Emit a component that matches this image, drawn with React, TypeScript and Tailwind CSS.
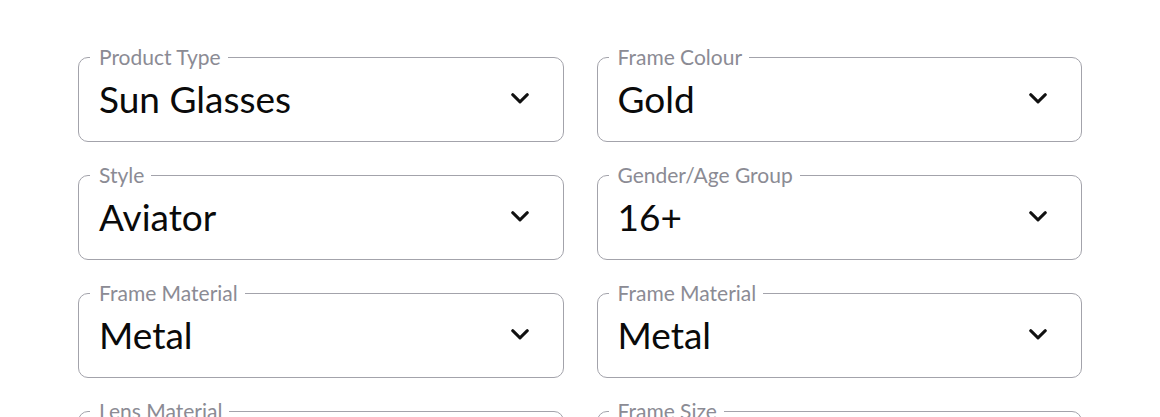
import { useState } from "react"

type Field = {
  label: string
  value: string
  options: string[]
}

const initialFields: Field[] = [
  { label: "Product Type", value: "Sun Glasses", options: ["Sun Glasses", "Eye Glasses", "Contact Lenses"] },
  { label: "Frame Colour", value: "Gold", options: ["Gold", "Silver", "Black", "Tortoise"] },
  { label: "Style", value: "Aviator", options: ["Aviator", "Wayfarer", "Round", "Cat Eye"] },
  { label: "Gender/Age Group", value: "16+", options: ["16+", "Kids", "Men", "Women"] },
  { label: "Frame Material", value: "Metal", options: ["Metal", "Plastic", "Titanium"] },
  { label: "Frame Material", value: "Metal", options: ["Metal", "Plastic", "Titanium"] },
  { label: "Lens Material", value: "Polycarbonate", options: ["Polycarbonate", "Glass", "Plastic"] },
  { label: "Frame Size", value: "Medium", options: ["Small", "Medium", "Large"] },
]

const Chevron = () => (
  <svg width="18" height="11" viewBox="0 0 18 11" fill="none" className="shrink-0">
    <path d="M1.7 1.7 9 8.8 16.3 1.7" stroke="#111" strokeWidth="3" strokeLinecap="round" strokeLinejoin="round" />
  </svg>
)

const SelectField = ({ field, onNext }: { field: Field; onNext: () => void }) => (
  <fieldset
    onClick={onNext}
    className="h-[97px] min-w-0 cursor-pointer rounded-[10px] border border-[#a3a3ab] pl-[11px] pr-[34px] pb-[20px] pt-[8px]"
  >
    <legend className="pl-[9px] pr-[7px] text-[21px] leading-[24px] text-[#8b8b94]">{field.label}</legend>
    <div className="flex items-center justify-between">
      <span className="pl-[9px] text-[37px] leading-[44px] text-[#0a0a0a]">{field.value}</span>
      <span className="-translate-y-[1px]">
        <Chevron />
      </span>
    </div>
  </fieldset>
)

export default function App() {
  const [fields, setFields] = useState(initialFields)

  const cycle = (i: number) => {
    setFields((prev) =>
      prev.map((f, idx) => {
        if (idx !== i) return f
        const next = (f.options.indexOf(f.value) + 1) % f.options.length
        return { ...f, value: f.options[next] }
      })
    )
  }

  return (
    <div className="min-h-screen bg-white px-[78px] pt-[45px] font-['Lato','Liberation_Sans',sans-serif] antialiased">
      <div className="grid grid-cols-2 gap-x-[33px] gap-y-[21px]">
        {fields.map((f, i) => (
          <SelectField key={i} field={f} onNext={() => cycle(i)} />
        ))}
      </div>
    </div>
  )
}
